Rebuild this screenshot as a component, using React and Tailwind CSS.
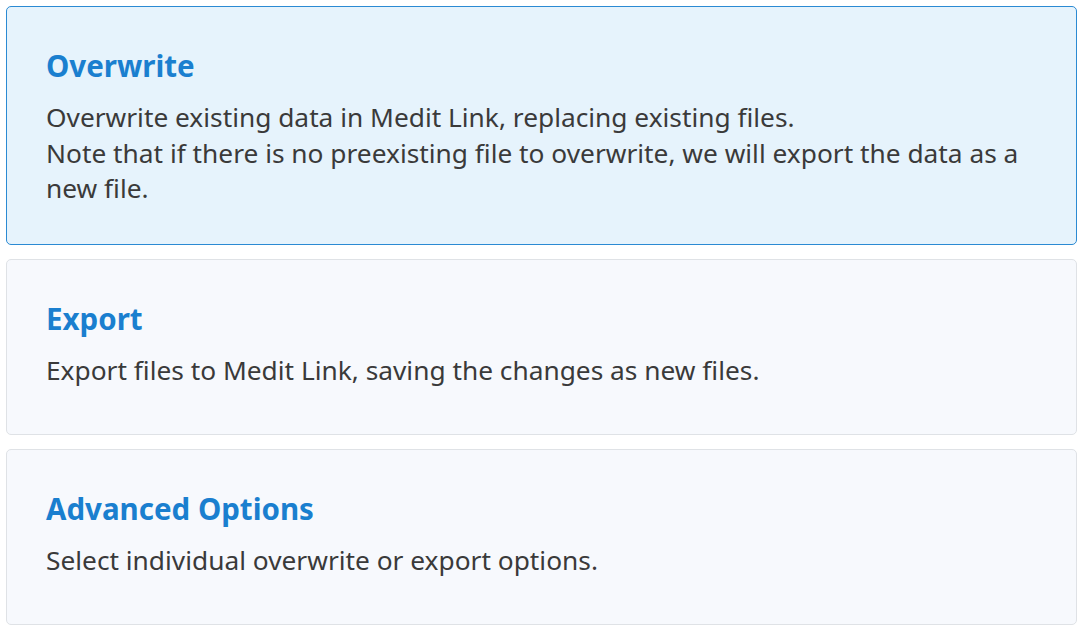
const options = [
    {
        title: 'Overwrite',
        lines: [
            'Overwrite existing data in Medit Link, replacing existing files.',
            'Note that if there is no preexisting file to overwrite, we will export the data as a new file.',
        ],
        selected: true,
    },
    {
        title: 'Export',
        lines: ['Export files to Medit Link, saving the changes as new files.'],
    },
    {
        title: 'Advanced Options',
        lines: ['Select individual overwrite or export options.'],
    },
];

function OptionCard({ title, lines, selected }) {
    return (
        <div
            className={
                selected
                    ? 'min-h-[176px] rounded-[5px] border-[1.5px] border-[#2b8ad3] bg-[#e6f3fc] pl-[39px] pr-[44px] pt-[41px] pb-[38px]'
                    : 'min-h-[176px] rounded-[5px] border-[1.5px] border-[#dfe2e6] bg-[#f7f9fd] pl-[39px] pr-[44px] pt-[41px] pb-[38px]'
            }
        >
            <div className="text-[29.5px] font-bold leading-[36px] text-[#1a7fcf]">
                {title}
            </div>
            <div className="mt-[16px] text-[26.3px] leading-[35.5px] text-[#3a3a3a]">
                {lines.map((line) => (
                    <p key={line}>{line}</p>
                ))}
            </div>
        </div>
    );
}

export default function App() {
    return (
        <div
            className="flex h-[631px] w-[1083px] flex-col gap-[14px] bg-white p-[6px]"
            style={{ fontFamily: '"Noto Sans", "Open Sans", sans-serif' }}
        >
            {options.map((option) => (
                <OptionCard key={option.title} {...option} />
            ))}
        </div>
    );
}
